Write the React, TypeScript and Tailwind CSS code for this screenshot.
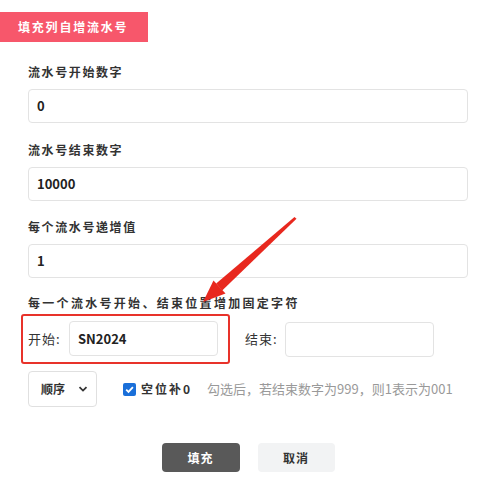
const font = { fontFamily: '"Noto Sans CJK SC", "Noto Sans", sans-serif' };

function Label({ children, wide }: { children: React.ReactNode; wide?: boolean }) {
  return (
    <div
      className={
        wide
          ? "h-4 text-[12px] leading-4 font-bold tracking-[2.3px] text-[#333]"
          : "h-4 text-[12px] leading-4 font-bold tracking-[1.6px] text-[#333]"
      }
    >
      {children}
    </div>
  );
}

function Field({ value }: { value: string }) {
  return (
    <div className="mt-[9px] flex h-[34px] items-center rounded-[4px] border border-[#e3e3e3] bg-white px-[8px] text-[13px] font-bold text-[#222]">
      {value}
    </div>
  );
}

export default function App() {
  return (
    <div className="relative h-[499px] w-[496px] overflow-hidden bg-white" style={font}>
      <div className="mt-[12px] flex h-[30px] w-[148px] items-center bg-[#f7576b] pl-[18px] text-[12px] font-bold tracking-[1.8px] text-white">
        填充列自增流水号
      </div>

      <div className="px-[28px] pt-[22px]">
        <Label>流水号开始数字</Label>
        <Field value="0" />

        <div className="mt-[19px]">
          <Label>流水号结束数字</Label>
          <Field value="10000" />
        </div>

        <div className="mt-[18px]">
          <Label>每个流水号递增值</Label>
          <Field value="1" />
        </div>

        <div className="mt-[17px]">
          <Label wide>每一个流水号开始、结束位置增加固定字符</Label>
        </div>

        <div className="mt-[3px] -ml-[7px] flex items-center">
          <div className="flex items-center rounded-[3px] border-2 border-[#e8322a] pt-[5px] pb-[6px] pl-[5px] pr-[10px]">
            <span className="w-[41px] text-[13px] tracking-[1px] text-[#333]">开始:</span>
            <div className="flex h-[35px] w-[149px] items-center rounded-[4px] border border-[#e3e3e3] px-[8px] text-[13px] font-bold text-[#222]">
              SN2024
            </div>
          </div>
          <span className="ml-[15px] w-[40px] text-[13px] tracking-[1px] text-[#333]">结束:</span>
          <div className="h-[35px] w-[149px] rounded-[4px] border border-[#e3e3e3]" />
        </div>

        <div className="mt-[7px] flex items-center">
          <div className="flex h-[36px] w-[69px] items-center justify-between rounded-[4px] border border-[#e0e0e0] pl-[12px] pr-[8px] text-[12px] font-bold text-[#333]">
            <span>顺序</span>
            <svg width="10" height="10" viewBox="0 0 10 10">
              <path d="M1.5 3.2 L5 6.6 L8.5 3.2" fill="none" stroke="#333" strokeWidth="1.8" />
            </svg>
          </div>
          <span className="ml-[26px] flex h-[13px] w-[13px] items-center justify-center rounded-[2px] bg-[#1a6fd9]">
            <svg width="11" height="11" viewBox="0 0 11 11">
              <path d="M2.2 5.6 L4.5 7.9 L8.9 3.2" fill="none" stroke="white" strokeWidth="1.8" />
            </svg>
          </span>
          <span className="ml-[5px] text-[12px] font-bold tracking-[2px] text-[#333]">空位补0</span>
          <span className="ml-[15px] text-[13px] text-[#999]">勾选后，若结束数字为999，则1表示为001</span>
        </div>

        <div className="mt-[36px] flex justify-center gap-[18px]">
          <button className="h-[29px] w-[78px] rounded-[4px] bg-[#595959] text-[12px] font-bold tracking-[1px] text-white">
            填充
          </button>
          <button className="h-[29px] w-[77px] rounded-[4px] bg-[#f2f3f4] text-[12px] font-bold tracking-[1px] text-[#333]">
            取消
          </button>
        </div>
      </div>

      <svg className="pointer-events-none absolute left-0 top-0" width="496" height="499">
        <polygon points="294.5,217 296.5,218.8 222.2,290.5 216.2,283.5" fill="#e8281e" />
        <polygon points="203,302 225.5,293.5 213.5,280.5" fill="#e8281e" />
      </svg>
    </div>
  );
}
